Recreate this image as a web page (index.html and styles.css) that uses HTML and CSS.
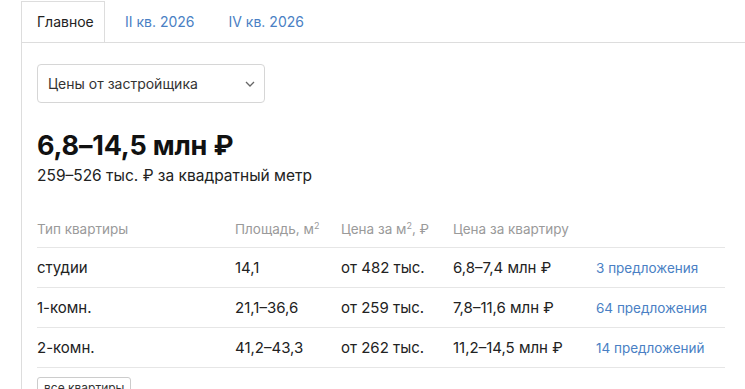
FILE: index.html
```html
<!DOCTYPE html>
<html lang="ru">
<head>
<meta charset="utf-8">
<link rel="stylesheet" href="styles.css">
</head>
<body>
<div class="tabs">
  <div class="tab active">Главное</div>
  <div class="tab">II кв. 2026</div>
  <div class="tab">IV кв. 2026</div>
</div>
<div class="panel">
  <div class="select">
    <span>Цены от застройщика</span>
    <svg class="chev" width="10" height="6" viewBox="0 0 10 6"><path d="M1 1l4 4 4-4" fill="none" stroke="#666" stroke-width="1.3"/></svg>
  </div>
  <div class="price">6,8–14,5 млн ₽</div>
  <div class="sub">259–526 тыс. ₽ за квадратный метр</div>
  <div class="table">
    <div class="row head">
      <div>Тип квартиры</div>
      <div>Площадь, м<sup>2</sup></div>
      <div>Цена за м<sup>2</sup>, ₽</div>
      <div>Цена за квартиру</div>
      <div></div>
    </div>
    <div class="row">
      <div>студии</div>
      <div>14,1</div>
      <div>от 482 тыс.</div>
      <div>6,8–7,4 млн ₽</div>
      <div class="link">3 предложения</div>
    </div>
    <div class="row">
      <div>1-комн.</div>
      <div>21,1–36,6</div>
      <div>от 259 тыс.</div>
      <div>7,8–11,6 млн ₽</div>
      <div class="link">64 предложения</div>
    </div>
    <div class="row">
      <div>2-комн.</div>
      <div>41,2–43,3</div>
      <div>от 262 тыс.</div>
      <div>11,2–14,5 млн ₽</div>
      <div class="link">14 предложений</div>
    </div>
  </div>
  <div class="all">все квартиры</div>
</div>
</body>
</html>
```
FILE: styles.css
```css
html, body {
  margin: 0;
  padding: 0;
  background: #fff;
}
body {
  font-family: Inter, "Noto Sans", sans-serif;
  color: #222;
  padding-top: 1px;
  overflow: hidden;
  height: 388px;
}
.tabs {
  display: flex;
  margin-left: 21px;
  height: 41px;
  position: relative;
  z-index: 1;
}
.tab {
  font-size: 14px;
  color: #4a7fc4;
  padding: 0 13px;
  line-height: 40px;
  border: 1px solid transparent;
  border-bottom: none;
  margin-left: 6px;
}
.tab.active {
  color: #222;
  border-color: #ddd;
  background: #fff;
  height: 41px;
  width: 84px;
  box-sizing: border-box;
  padding: 0 0 0 15px;
  margin-left: 0;
}
.panel {
  margin-left: 21px;
  width: 718px;
  border: 1px solid #ddd;
  padding: 21px 15px 40px 15px;
  box-sizing: content-box;
}
.select {
  height: 37px;
  border: 1px solid #d6d6d6;
  border-radius: 4px;
  display: flex;
  align-items: center;
  justify-content: space-between;
  padding: 0 9px 0 10px;
  box-sizing: content-box;
  width: 207px;
  font-size: 14px;
  color: #333;
}
.chev {
  margin-top: 1px;
}
.price {
  font-size: 27px;
  font-weight: 700;
  color: #111;
  margin-top: 27px;
  line-height: 32px;
  letter-spacing: -0.2px;
}
.sub {
  font-size: 15.5px;
  line-height: 20px;
  margin-top: 4px;
  color: #222;
}
.table {
  width: 688px;
  margin-top: 24px;
}
.row {
  display: grid;
  grid-template-columns: 198px 106px 112px 143px 129px;
  height: 39px;
  align-items: center;
  border-bottom: 1px solid #e6e6e6;
  font-size: 15px;
  color: #222;
}
.row.head {
  font-size: 13.5px;
  color: #9a9a9a;
  height: 37px;
}
.row.head sup {
  font-size: 9px;
  vertical-align: 5px;
  line-height: 0;
}
.link {
  color: #4a7fc4;
  font-size: 13.5px;
}
.all {
  display: inline-block;
  margin-top: 9px;
  border: 1px solid #ccc;
  border-radius: 3px;
  font-size: 12px;
  padding: 2px 6px;
  color: #333;
}
```
